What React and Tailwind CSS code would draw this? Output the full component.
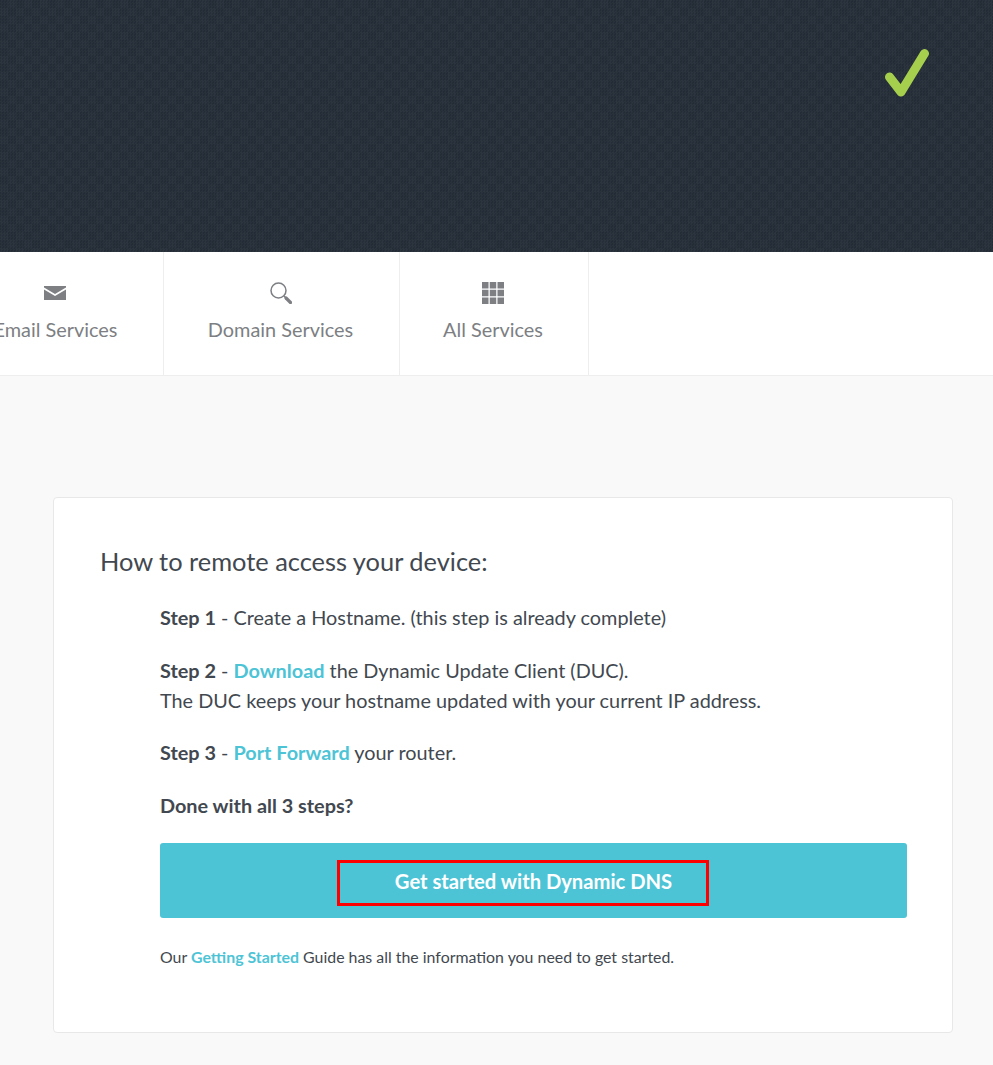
import React from 'react';

function MailIcon() {
    return (
        <svg width="22" height="22" viewBox="0 0 22 22" fill="#7d7f83" className="mr-[2px]">
            <path d="M0 4h22v1.500L11 12 0 5.500z" />
            <path d="M0 7.500 11 14l11-6.500V18H0z" />
        </svg>
    )
}

function SearchIcon() {
    return (
        <svg width="22" height="22" viewBox="0 0 22 22" fill="none" stroke="#7d7f83">
            <circle cx="8.500" cy="8.500" r="7.500" strokeWidth="1.500" />
            <path d="M14 14l2 2" strokeWidth="1.500" />
            <path d="M16 16l4.500 4.500" strokeWidth="3.200" strokeLinecap="round" />
        </svg>
    )
}

function GridIcon() {
    return (
        <svg width="22" height="22" viewBox="0 0 22 22" fill="#7d7f83">
            <rect x="0" y="0" width="6.500" height="6.500" />
            <rect x="7.750" y="0" width="6.500" height="6.500" />
            <rect x="15.500" y="0" width="6.500" height="6.500" />
            <rect x="0" y="7.750" width="6.500" height="6.500" />
            <rect x="7.750" y="7.750" width="6.500" height="6.500" />
            <rect x="15.500" y="7.750" width="6.500" height="6.500" />
            <rect x="0" y="15.500" width="6.500" height="6.500" />
            <rect x="7.750" y="15.500" width="6.500" height="6.500" />
            <rect x="15.500" y="15.500" width="6.500" height="6.500" />
        </svg>
    )
}

function NavItem({ icon, label, width }) {
    return (
        <a href="#" className={`flex flex-col items-center shrink-0 h-full pt-[30px] border-r border-[#eeeeee] ${width}`}>
            {icon}
            <span className="mt-[10px] text-[19.9px] leading-[30px] text-[#7d7f83] whitespace-nowrap">{label}</span>
        </a>
    )
}

export default function App() {
    return (
        <div className="min-h-[1065px] w-full overflow-hidden bg-[#f9f9f9] font-['Lato','Noto_Sans',sans-serif] text-[#42484f]">
            <header className="flex justify-end h-[252px] pt-[48px] pr-[63px] bg-[#262e39] bg-[repeating-conic-gradient(#ffffff04_0_25%,transparent_0_50%),repeating-conic-gradient(#29313b_0_25%,#232b36_0_50%)] bg-[length:16px_16px,3px_3px]">
                <svg width="46" height="50" viewBox="0 0 46 50" fill="none" className="shrink-0">
                    <path d="M5.500 29l11.500 15L40.500 5.500" stroke="#a5cf4c" strokeWidth="9" strokeLinecap="round" strokeLinejoin="round" />
                </svg>
            </header>

            <nav className="flex h-[124px] ml-[-53px] bg-white border-b border-[#eeeeee] w-[calc(100%+53px)]">
                <NavItem icon={<MailIcon />} label="Email Services" width="w-[217px] pl-[1px]" />
                <NavItem icon={<SearchIcon />} label="Domain Services" width="w-[236px] pr-[2px]" />
                <NavItem icon={<GridIcon />} label="All Services" width="w-[189px] pr-[2px]" />
            </nav>

            <main className="pt-[121px] pb-[32px] pl-[53px] pr-[40px]">
                <div className="pt-[45px] pb-[60px] pl-[46px] pr-[45px] bg-white border border-[#e8e8e8] rounded">
                    <h2 className="mb-[23px] text-[25.4px] leading-[36px] font-normal">How to remote access your device:</h2>
                    <div className="pl-[60px] text-[19.85px] leading-[30px]">
                        <p className="mb-[23px]"><b className="font-bold">Step 1</b> - Create a Hostname. (this step is already complete)</p>
                        <p className="mb-[22px]">
                            <b className="font-bold">Step 2</b> - <a href="#" className="font-bold text-[#4dc4d6]">Download</a> the Dynamic Update Client (DUC).
                            <br />
                            The DUC keeps your hostname updated with your current IP address.
                        </p>
                        <p className="mb-[23px]"><b className="font-bold">Step 3</b> - <a href="#" className="font-bold text-[#4dc4d6]">Port Forward</a> your router.</p>
                        <p className="mb-[23px] font-bold">Done with all 3 steps?</p>
                        <a href="#" className="relative flex items-center justify-center h-[75px] rounded-[3px] bg-[#4dc4d6] text-white text-[20.2px] font-bold">
                            Get started with Dynamic DNS
                            <span className="absolute left-[177px] top-[17px] w-[372px] h-[46px] border-[3px] border-[#ff0000]"></span>
                        </a>
                        <p className="mt-[24px] text-[15.9px] leading-[30px]">
                            Our <a href="#" className="font-bold text-[#4dc4d6]">Getting Started</a> Guide has all the information you need to get started.
                        </p>
                    </div>
                </div>
            </main>
        </div>
    )
}
